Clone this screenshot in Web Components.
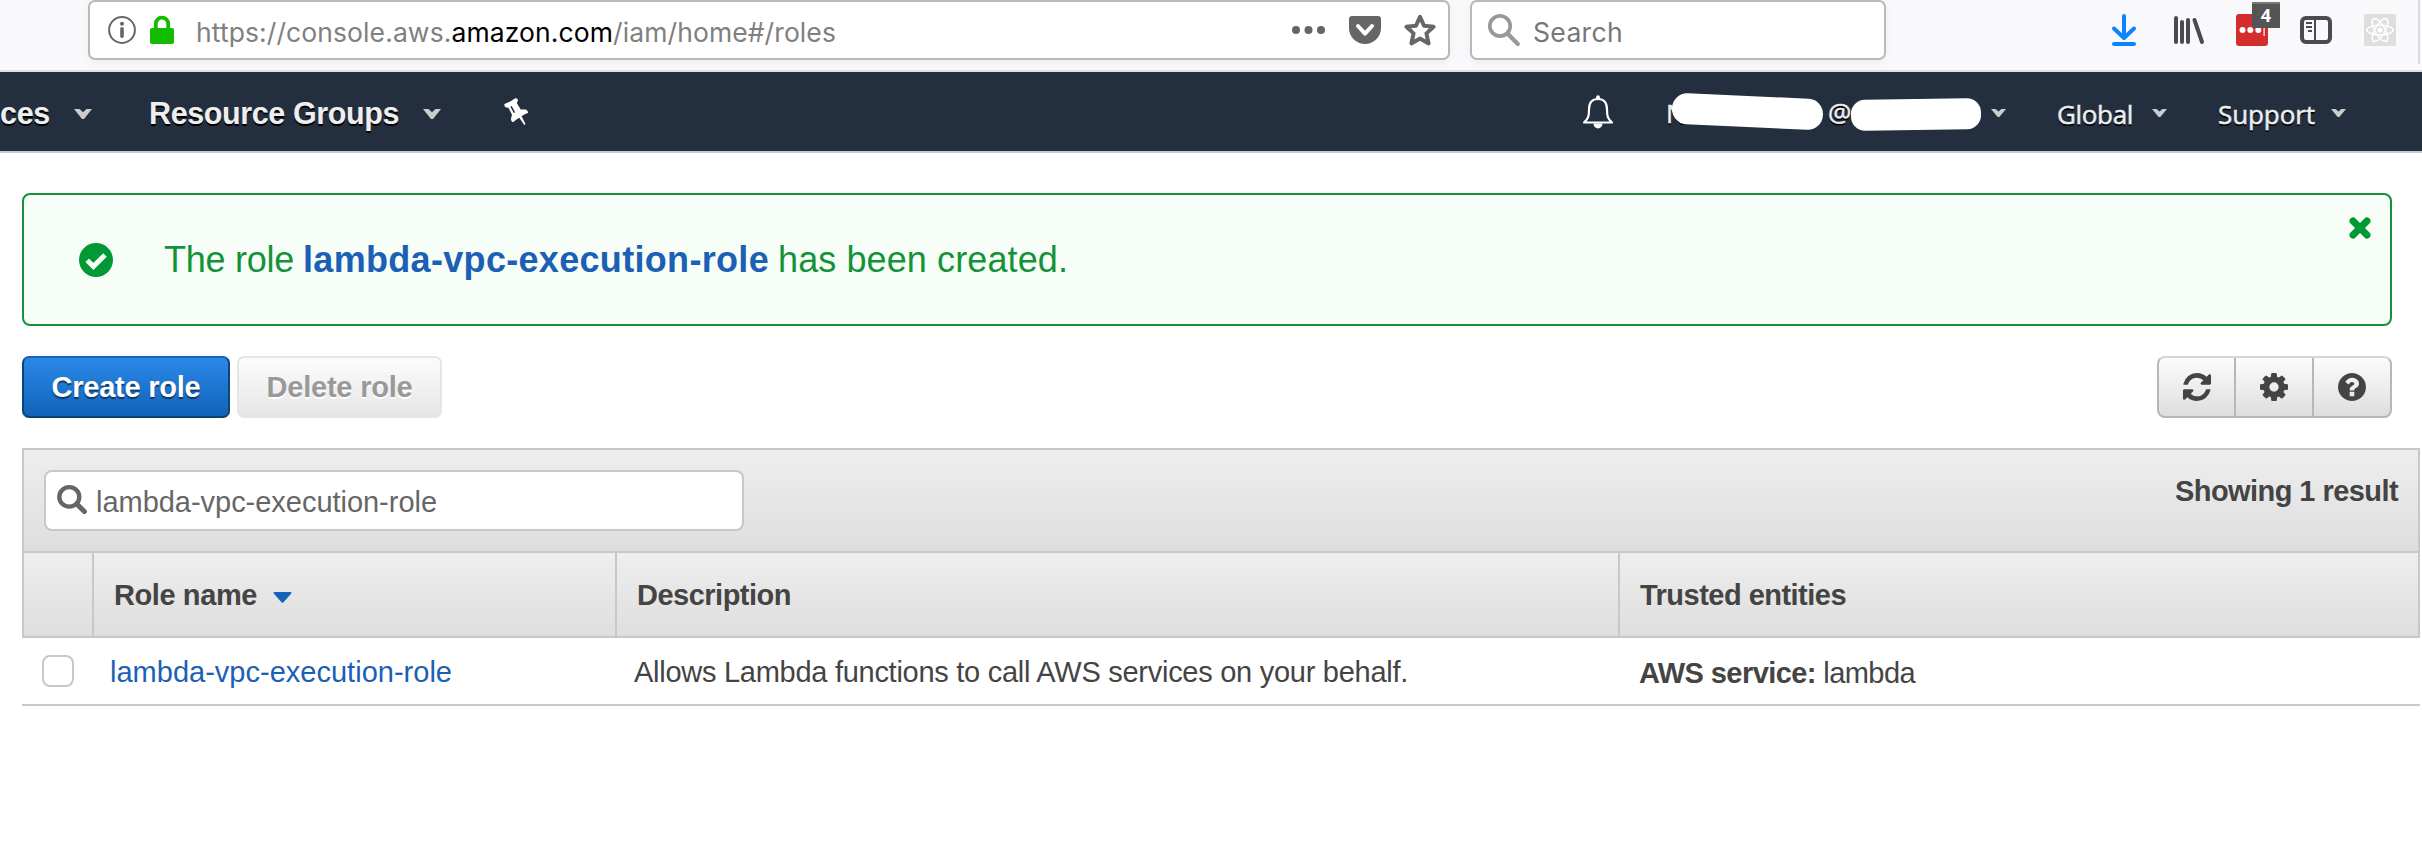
<!DOCTYPE html>
<html lang="en">
<head>
<meta charset="utf-8">
<title>IAM Management Console</title>
<style>
html,body{margin:0;height:100%;background:#fff;overflow:hidden}
body{font-family:"Liberation Sans",Arial,sans-serif;color:#444}
</style>
</head>
<body>
<iam-app></iam-app>

<script>
const part = (name, html, setup) => customElements.define(name, class extends HTMLElement {
  constructor() {
    super();
    const t = document.createElement('template');
    t.innerHTML = html;
    this.attachShadow({mode: 'open'}).append(t.content.cloneNode(true));
  }
  connectedCallback() { if (setup) setup(this); }
});

/* Text tracked to an exact advance width */
part('fit-text', `<style>:host{display:inline-block;white-space:nowrap;flex:none}</style><slot></slot>`, el => {
  queueMicrotask(() => {
    const want = parseFloat(el.getAttribute('w'));
    const n = el.textContent.length;
    const have = el.getBoundingClientRect().width;
    el.style.letterSpacing = ((want - have) / n) + 'px';
    el.style.width = want + 'px';
  });
});

const glyphs = {
  info: ['0 0 28 28', '<circle cx="14" cy="14" r="12.9" fill="none" stroke="#666" stroke-width="2"/><circle cx="14" cy="7.8" r="2" fill="#666"/><path d="M14 12.8v7.4" stroke="#666" stroke-width="3.6" stroke-linecap="round"/>'],
  lock: ['0 0 24 28', '<path d="M5.8 13V7.8a6.2 6.2 0 0 1 12.4 0V13" fill="none" stroke="#12bc00" stroke-width="3.8"/><rect x="0" y="12" width="24" height="16" rx="2" fill="#12bc00"/>'],
  dots: ['0 0 34 8', '<circle cx="4" cy="4" r="4"/><circle cx="16.500" cy="4" r="4"/><circle cx="29" cy="4" r="4"/>'],
  pocket: ['0 0 32 28', '<path d="M3 0h26a3 3 0 0 1 3 3v9a16 16 0 0 1-32 0V3a3 3 0 0 1 3-3z"/><path d="M9 10l7 7.6 7-7.6" fill="none" stroke="#fff" stroke-width="4" stroke-linecap="round" stroke-linejoin="round"/>'],
  star: ['0 0 32 32', '<path d="M16 2.8l4 9 9.6 1-7.2 6.6 2.2 10L16 24.600l-8.600 4.800 2.200-10-7.200-6.600 9.600-1z" fill="none" stroke="currentColor" stroke-width="4" stroke-linejoin="round"/>'],
  find: ['0 0 32 32', '<circle cx="12" cy="12" r="10.200" fill="none" stroke="currentColor" stroke-width="3.800"/><path d="M19.500 19.500l10.300 10.500" stroke="currentColor" stroke-width="4.200" stroke-linecap="round"/>'],
  glass: ['0 0 30 30', '<circle cx="12.300" cy="12.300" r="10" fill="none" stroke="currentColor" stroke-width="4.400"/><path d="M20 20l7.400 7.400" stroke="currentColor" stroke-width="5" stroke-linecap="round"/>'],
  download: ['0 0 24 32', '<path d="M12 2v22M2 14.500l10 9.500 10-9.500M2 30h20" fill="none" stroke="#0a84ff" stroke-width="4" stroke-linecap="round" stroke-linejoin="round"/>'],
  library: ['0 0 30 28', '<path d="M2 2v24M8 6v20M14 4v22M20.500 4l7.500 22" fill="none" stroke="#4a4a4f" stroke-width="4" stroke-linecap="round"/>'],
  sidebar: ['0 0 32 28', '<rect x="2" y="2" width="28" height="24" rx="4" fill="none" stroke="#4a4a4f" stroke-width="4"/><path d="M15 3v22" stroke="#4a4a4f" stroke-width="2"/><path d="M6 7h6M6 11h6M8 15h4" stroke="#4a4a4f" stroke-width="2"/>'],
  react: ['0 0 32 32', '<rect width="32" height="32" rx="2" fill="#dedede"/><g fill="none" stroke="#fff" stroke-width="1.500"><ellipse cx="16" cy="16" rx="13" ry="5"/><ellipse cx="16" cy="16" rx="13" ry="5" transform="rotate(60 16 16)"/><ellipse cx="16" cy="16" rx="13" ry="5" transform="rotate(120 16 16)"/></g><circle cx="16" cy="16" r="2.600" fill="#fff"/>'],
  vault: ['0 0 32 32', '<rect width="32" height="32" rx="3" fill="#d32d2d"/><g fill="#fff"><circle cx="6.500" cy="16" r="3"/><circle cx="14.300" cy="16" r="3"/><circle cx="22.300" cy="16" r="3"/><path d="M27.500 10h1.200v12h-1.200z"/></g>'],
  caret: ['0 0 18 11', '<path d="M0 0h5.500l3.500 3.500L12.500 0H18L10 11H8z"/>'],
  pin: ['0 0 24 27', '<path fill-rule="evenodd" d="M.5 6Q6 4 10.800.4q3-.8 3.200 2.200L12.800 5l3.900 6.400 5.100.1q2.800 1.600 2 3.600-3 1-6.200 3.100L21.500 26l-1.200.9-5-7.100Q12 21.500 9.200 24.200q-2.600-.8-2.200-3.800l1-3.700L4.500 9.800 2.200 9.500Q-.3 8.500.5 6zM6.300 8.800l3.500 6.200 1.300-.7L7.700 8z"/>'],
  bell: ['0 0 32 34', '<path d="M2 27.500C6.500 24 7 20.500 7 14.500 7 7.500 10.500 4 16 4s9 3.500 9 10.500c0 6 .5 9.500 5 13z" fill="none" stroke="currentColor" stroke-width="2.200" stroke-linejoin="round"/><circle cx="16" cy="2.200" r="1.900"/><path d="M11.500 28.500h9a4.500 5 0 0 1-9 0z"/>'],
  ok: ['0 0 34 34', '<circle cx="17" cy="17" r="17"/><path d="M8.200 17.200l6.200 6.200L26 12" fill="none" stroke="#f6fef7" stroke-width="5"/>'],
  close: ['0 0 22 22', '<path d="M4 4l14 14M18 4L4 18" stroke="currentColor" stroke-width="7" stroke-linecap="round"/>'],
  refresh: ['0 0 1536 1536', '<path d="M1511 928q0 5-1 7-64 268-268 434.500T764 1536q-146 0-282.500-55T238 1324l-129 129q-19 19-45 19t-45-19-19-45V960q0-26 19-45t45-19h448q26 0 45 19t19 45-19 45l-137 137q71 66 161 102t187 36q134 0 250-65t186-179q11-17 53-117 8-23 30-23h192q13 0 22.500 9.500t9.500 22.500zm25-800v448q0 26-19 45t-45 19h-448q-26 0-45-19t-19-45 19-45l138-138Q969 256 768 256q-134 0-250 65T332 500q-11 17-53 117-8 23-30 23H50q-13 0-22.500-9.500T18 608v-7q65-268 270-434.500T768 0q146 0 284 55.500T1297 212l130-129q19-19 45-19t45 19 19 45z"/>'],
  gear: ['0 0 1536 1536', '<path d="M1024 768q0-106-75-181t-181-75-181 75-75 181 75 181 181 75 181-75 75-181zm512-109v222q0 12-8 23t-20 13l-185 28q-19 54-39 91 35 50 107 138 10 12 10 25t-9 23q-27 37-99 108t-94 71q-12 0-26-9l-138-108q-44 23-91 38-16 136-29 186-7 28-36 28H657q-14 0-24.500-8.500T621 1506l-28-184q-49-16-90-37l-141 107q-10 9-25 9-14 0-25-11-126-114-165-168-7-10-7-23 0-12 8-23 15-21 51-66.500t54-70.500q-27-50-41-99L29 913q-13-2-21-12.500T0 877V655q0-12 8-23t19-13l186-28q14-46 39-92-40-57-107-138-10-12-10-24 0-10 9-23 26-36 98.500-107.500T337 135q13 0 26 10l138 107q44-23 91-38 16-136 29-186 7-28 36-28h222q14 0 24.500 8.500T915 30l28 184q49 16 90 37l142-107q9-9 24-9 13 0 25 10 129 119 165 170 7 8 7 22 0 12-8 23-15 21-51 66.500t-54 70.500q26 50 41 98l183 28q13 2 21 12.500t8 23.500z"/>'],
  help: ['0 0 1536 1536', '<path d="M896 1248v-192q0-14-9-23t-23-9H672q-14 0-23 9t-9 23v192q0 14 9 23t23 9h192q14 0 23-9t9-23zm256-672q0-88-55.500-163T958 297t-170-41q-243 0-371 213-15 24 8 42l132 100q7 6 19 6 16 0 25-12 53-68 86-92 34-24 86-24 48 0 85.500 26t37.500 59q0 38-20 61t-68 45q-63 28-115.500 86.500T640 892v36q0 14 9 23t23 9h192q14 0 23-9t9-23q0-19 21.500-49.500T972 829q32-18 49-28.500t46-35 44.500-48 28-60.500 12.500-81zm384 192q0 209-103 385.500T1153.500 1433 768 1536t-385.500-103T103 1153.500 0 768t103-385.500T382.500 103 768 0t385.500 103T1433 382.500 1536 768z"/>'],
  sort: ['0 0 18 11', '<path d="M1.500 0h15q1.500 0 .8 1.400L10 10.300q-1 1-2 0L.7 1.400Q0 0 1.500 0z"/>']
};
part('ui-icon', `<style>:host{display:block;flex:none}svg{display:block;width:100%;height:100%;fill:currentColor;overflow:visible}</style><svg preserveAspectRatio="none"></svg>`, el => {
  const g = glyphs[el.getAttribute('name')], svg = el.shadowRoot.querySelector('svg');
  svg.setAttribute('viewBox', g[0]);
  svg.innerHTML = g[1];
  el.style.width = el.getAttribute('w') + 'px';
  el.style.height = el.getAttribute('h') + 'px';
});

part('browser-bar', `<style>
:host{display:flex;height:70px;box-sizing:content-box;border-bottom:2px solid #dde1e7;background:#f9f9fb;align-items:flex-start;padding-left:88px}
*{box-sizing:border-box}
.field{height:60px;border:2px solid #b9b9ba;border-radius:7px;background:#fff;display:flex;align-items:center;box-shadow:0 2px 8px #0000000d;color:#666;font:26.500px/34px Inter,sans-serif}
.field fit-text{margin-top:3px}
.url{width:1362px;padding:0 12px 0 18px}
.url fit-text{color:#808080}
.url .lk{margin:0 22px 0 14px}
b{font-weight:400;color:#000}
.acts{display:flex;align-items:center;gap:23px;margin-left:auto}
.search{width:416px;margin-left:20px;padding-left:16px}
.search ui-icon{color:#999;margin-right:13px}
.search fit-text{color:#777}
.tools{display:flex;height:60px;margin-left:226px;align-items:center}
.ext{position:relative;margin:0 32px 0 32px}
.badge{position:absolute;left:16px;top:-12px;width:28px;height:26px;background:#555;border-top:2px solid #777;color:#fff;font:700 18px/23px "Open Sans",sans-serif;text-align:center}
.edge{width:2px;height:64px;background:#dcdce0;margin-left:22px;align-self:flex-start}
</style>
<div class="field url"><ui-icon name="info" w="28" h="28"></ui-icon><ui-icon class="lk" name="lock" w="24" h="28"></ui-icon><fit-text w="640">https://console.aws.<b>amazon.com</b>/iam/home#/roles</fit-text>
<div class="acts"><ui-icon name="dots" w="34" h="8"></ui-icon><ui-icon name="pocket" w="32" h="28"></ui-icon><ui-icon name="star" w="32" h="32"></ui-icon></div></div>
<div class="field search"><ui-icon name="find" w="32" h="32"></ui-icon><fit-text w="90">Search</fit-text></div>
<div class="tools"><ui-icon name="download" w="24" h="32"></ui-icon><ui-icon name="library" w="30" h="28" style="margin-left:38px"></ui-icon>
<div class="ext"><ui-icon name="vault" w="32" h="32"></ui-icon><span class="badge">4</span></div>
<ui-icon name="sidebar" w="32" h="28"></ui-icon><ui-icon name="react" w="32" h="32" style="margin-left:32px"></ui-icon><span class="edge"></span></div>`);

part('console-nav', `<style>
:host{display:flex;height:79px;background:#232f3e;border-bottom:2px solid #c9cbd0;color:#eee;align-items:center;font:700 30.500px/36px "Liberation Sans",Arial,sans-serif;text-shadow:0 2px 0 #000}
.cut{width:50px;display:flex;justify-content:flex-end;overflow:hidden}
.c{color:#ccc;margin-top:3px}
.big{margin-top:3px}
.sm,.who{font:500 26px/36px "Open Sans","Noto Sans",sans-serif;-webkit-text-stroke:.5px #eee}
.sm{margin-top:4px}
.who{display:flex;width:310px;height:40px;position:relative;margin-left:58px;margin-top:6px}
.at{position:absolute;left:156px;top:-1px}
.n{position:absolute;left:-6px;top:0}
.blob{position:absolute;background:#fff}
</style>
<span class="cut big"><fit-text w="50">ces</fit-text></span><ui-icon class="c" name="caret" w="18" h="10" style="margin-left:24px;margin-top:4px"></ui-icon>
<fit-text class="big" w="250" style="margin-left:57px">Resource Groups</fit-text><ui-icon class="c" name="caret" w="18" h="10" style="margin-left:24px;margin-top:4px"></ui-icon>
<ui-icon name="pin" w="24" h="27" style="margin-left:63px;color:#fff;margin-top:-1px"></ui-icon>
<ui-icon name="bell" w="32" h="34" style="margin-left:1054px;color:#fff"></ui-icon>
<div class="who"><span class="n">N</span><span class="blob" style="left:0;top:1px;width:151px;height:31px;border-radius:15px;transform:rotate(2.600deg)"></span><span class="at"><fit-text w="22">@</fit-text></span><span class="blob" style="left:179px;top:4px;width:130px;height:31px;border-radius:14px;transform:rotate(-.8deg)"></span></div>
<ui-icon class="c" name="caret" w="15" h="8" style="margin-left:9px"></ui-icon>
<fit-text class="sm" w="76" style="margin-left:51px">Global</fit-text><ui-icon class="c" name="caret" w="15" h="8" style="margin-left:19px"></ui-icon>
<fit-text class="sm" w="97" style="margin-left:51px">Support</fit-text><ui-icon class="c" name="caret" w="15" h="8" style="margin-left:16px"></ui-icon>`);

part('success-alert', `<style>
:host{display:flex;box-sizing:border-box;height:133px;border:2px solid #149239;border-radius:8px;background:#f6fef7;color:#149239;padding:0 19px 0 55px;font-size:36px;line-height:40px;align-items:center}
ui-icon{color:#093}
.msg{margin-left:51px;display:flex;margin-top:1px}
.x{margin:-63px 0 0 auto}
</style>
<ui-icon name="ok" w="34" h="34"></ui-icon><div class="msg"><slot></slot></div><ui-icon class="x" name="close" w="22" h="22"></ui-icon>`);

part('ui-button', `<style>
:host{display:flex;box-sizing:border-box;height:62px;justify-content:center;align-items:center;border:2px solid #e5e5e5;border-radius:7px;background:linear-gradient(#fcfcfc,#e6e6e6);color:#999;font-weight:700;font-size:29px;text-shadow:0 2px 0 #fff}
:host([primary]){border-color:#1663b5 #0f4478 #0e4074;background:linear-gradient(#2b88e8,#1163b8);color:#fff;text-shadow:0 2px 1px #00000080}
</style><slot></slot>`);

part('icon-group', `<style>
:host{display:flex;box-sizing:border-box;width:235px;height:62px;border:2px solid #b7b7b7;border-top-color:#d6d6d6;border-radius:8px;background:linear-gradient(#fcfcfc,#dedede);color:#444}
span{box-sizing:border-box;width:75px;display:flex;align-items:center;justify-content:center;padding-bottom:1px}
span+span{width:78px;border-left:2px solid #b7b7b7}
</style><span><ui-icon name="refresh" w="28" h="28"></ui-icon></span><span><ui-icon name="gear" w="28" h="28"></ui-icon></span><span><ui-icon name="help" w="28" h="28"></ui-icon></span>`);

part('role-table', `<style>
:host{display:block;width:2398px;font-size:29px;line-height:34px;color:#444}
*{box-sizing:border-box}
.bar{height:105px;border:2px solid #c8c8c8;background:linear-gradient(#eee,#dedede);display:flex;justify-content:space-between;padding:20px 20px 0}
.q{width:700px;height:61px;border:2px solid #c8c8c8;border-radius:8px;background:#fff;display:flex;align-items:center;padding-left:11px;color:#666}
.q fit-text{margin:2px 0 0 9px}
.cnt{font-weight:700;padding-top:4px}
.row{display:grid;grid-template-columns:68px 523px 1003px 1fr}
.head{height:85px;border:2px solid #c8c8c8;border-top:0;background:linear-gradient(#eee,#dedede);font-weight:700}
.head>div{display:flex;align-items:center;padding:1px 0 0 20px}
.head>div+div{border-left:2px solid #c8c8c8}
.head ui-icon{margin:4px 0 0 16px;color:#1166bb}
.body{height:68px;border-bottom:2px solid #c8c8c8;background:#fff;padding-left:1px}
.body>div{display:flex;align-items:center;padding:1px 0 0 19px}
i{width:32px;height:32px;border:2px solid #c8c8c8;border-radius:8px;background:#fff;margin-top:-1px}
.a{color:#1b60b5}
</style>
<div class="bar"><div class="q"><ui-icon name="glass" w="30" h="29" style="margin-top:-3px"></ui-icon><fit-text w="341">lambda-vpc-execution-role</fit-text></div><div class="cnt"><fit-text w="223">Showing 1 result</fit-text></div></div>
<div class="row head"><div></div><div><fit-text w="143">Role name</fit-text><ui-icon name="sort" w="19" h="11"></ui-icon></div><div><fit-text w="154">Description</fit-text></div><div><fit-text w="206">Trusted entities</fit-text></div></div>
<div class="row body"><div><i></i></div><div class="a"><fit-text w="342">lambda-vpc-execution-role</fit-text></div><div style="padding-left:20px"><fit-text w="774">Allows Lambda functions to call AWS services on your behalf.</fit-text></div><div style="padding:4px 0 0 22px"><fit-text w="276"><b>AWS service:</b> lambda</fit-text></div></div>`);

part('iam-app', `<style>
:host{display:flex;flex-direction:column;width:2422px;height:868px;overflow:hidden;background:#fff}
main{padding:40px 0 0 22px}
success-alert,.tools{width:2370px}
.tools{display:flex;margin:30px 0;gap:7px}
icon-group{margin-left:auto}
strong{color:#1b60b5}
</style>
<browser-bar></browser-bar><console-nav></console-nav>
<main><success-alert><fit-text w="130" style="margin-right:9px">The role</fit-text><strong><fit-text w="466">lambda-vpc-execution-role</fit-text></strong><fit-text w="290" style="margin-left:9px">has been created.</fit-text></success-alert>
<div class="tools"><ui-button primary style="width:208px"><fit-text w="149">Create role</fit-text></ui-button><ui-button style="width:205px"><fit-text w="146">Delete role</fit-text></ui-button><icon-group></icon-group></div>
<role-table></role-table></main>`);
</script>
</body>
</html>
